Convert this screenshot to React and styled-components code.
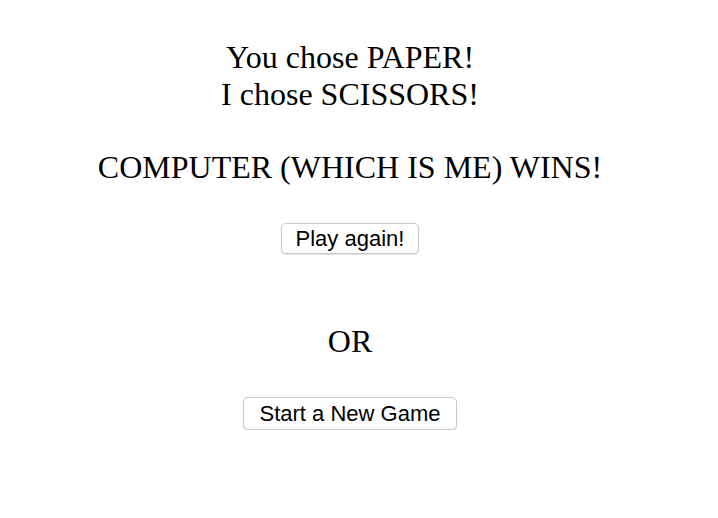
import React from "react";
import styled, { createGlobalStyle } from "styled-components";

const GlobalStyle = createGlobalStyle`
  html, body {
    margin: 0;
    padding: 0;
    background: #ffffff;
  }
  body {
    font-family: "Liberation Serif", "Times New Roman", serif;
    color: #000;
  }
`;

const Page = styled.div`
  width: 700px;
  padding-top: 39px;
  display: flex;
  flex-direction: column;
  align-items: center;
`;

const Message = styled.div`
  font-family: "Liberation Serif", "Times New Roman", serif;
  font-size: 32px;
  line-height: 36.8px;
  text-align: center;
`;

const Line = styled.div`
  height: 36.8px;
`;

const Or = styled.div`
  font-family: "Liberation Serif", "Times New Roman", serif;
  font-size: 32px;
  line-height: 36.8px;
  margin-top: ${(p) => p.$gap}px;
`;

const Button = styled.button`
  margin-top: ${(p) => p.$gap}px;
  font-family: "Liberation Sans", Arial, sans-serif;
  font-size: 22px;
  line-height: 25px;
  color: #000;
  background: #fff;
  border: 1px solid #c9c9c9;
  border-radius: 5px;
  box-shadow: 0 1px 1px rgba(0, 0, 0, 0.12);
  padding: ${(p) => (p.$big ? "3px 16px 3px" : "2px 14px 2px")};
  cursor: pointer;
`;

export default function App() {
  return (
    <>
      <GlobalStyle />
      <Page>
        <Message>
          <Line>You chose PAPER!</Line>
          <Line>I chose SCISSORS!</Line>
          <Line />
          <Line>COMPUTER (WHICH IS ME) WINS!</Line>
        </Message>
        <Button $gap={37}>Play again!</Button>
        <Or $gap={69}>OR</Or>
        <Button $gap={37} $big>Start a New Game</Button>
      </Page>
    </>
  );
}
